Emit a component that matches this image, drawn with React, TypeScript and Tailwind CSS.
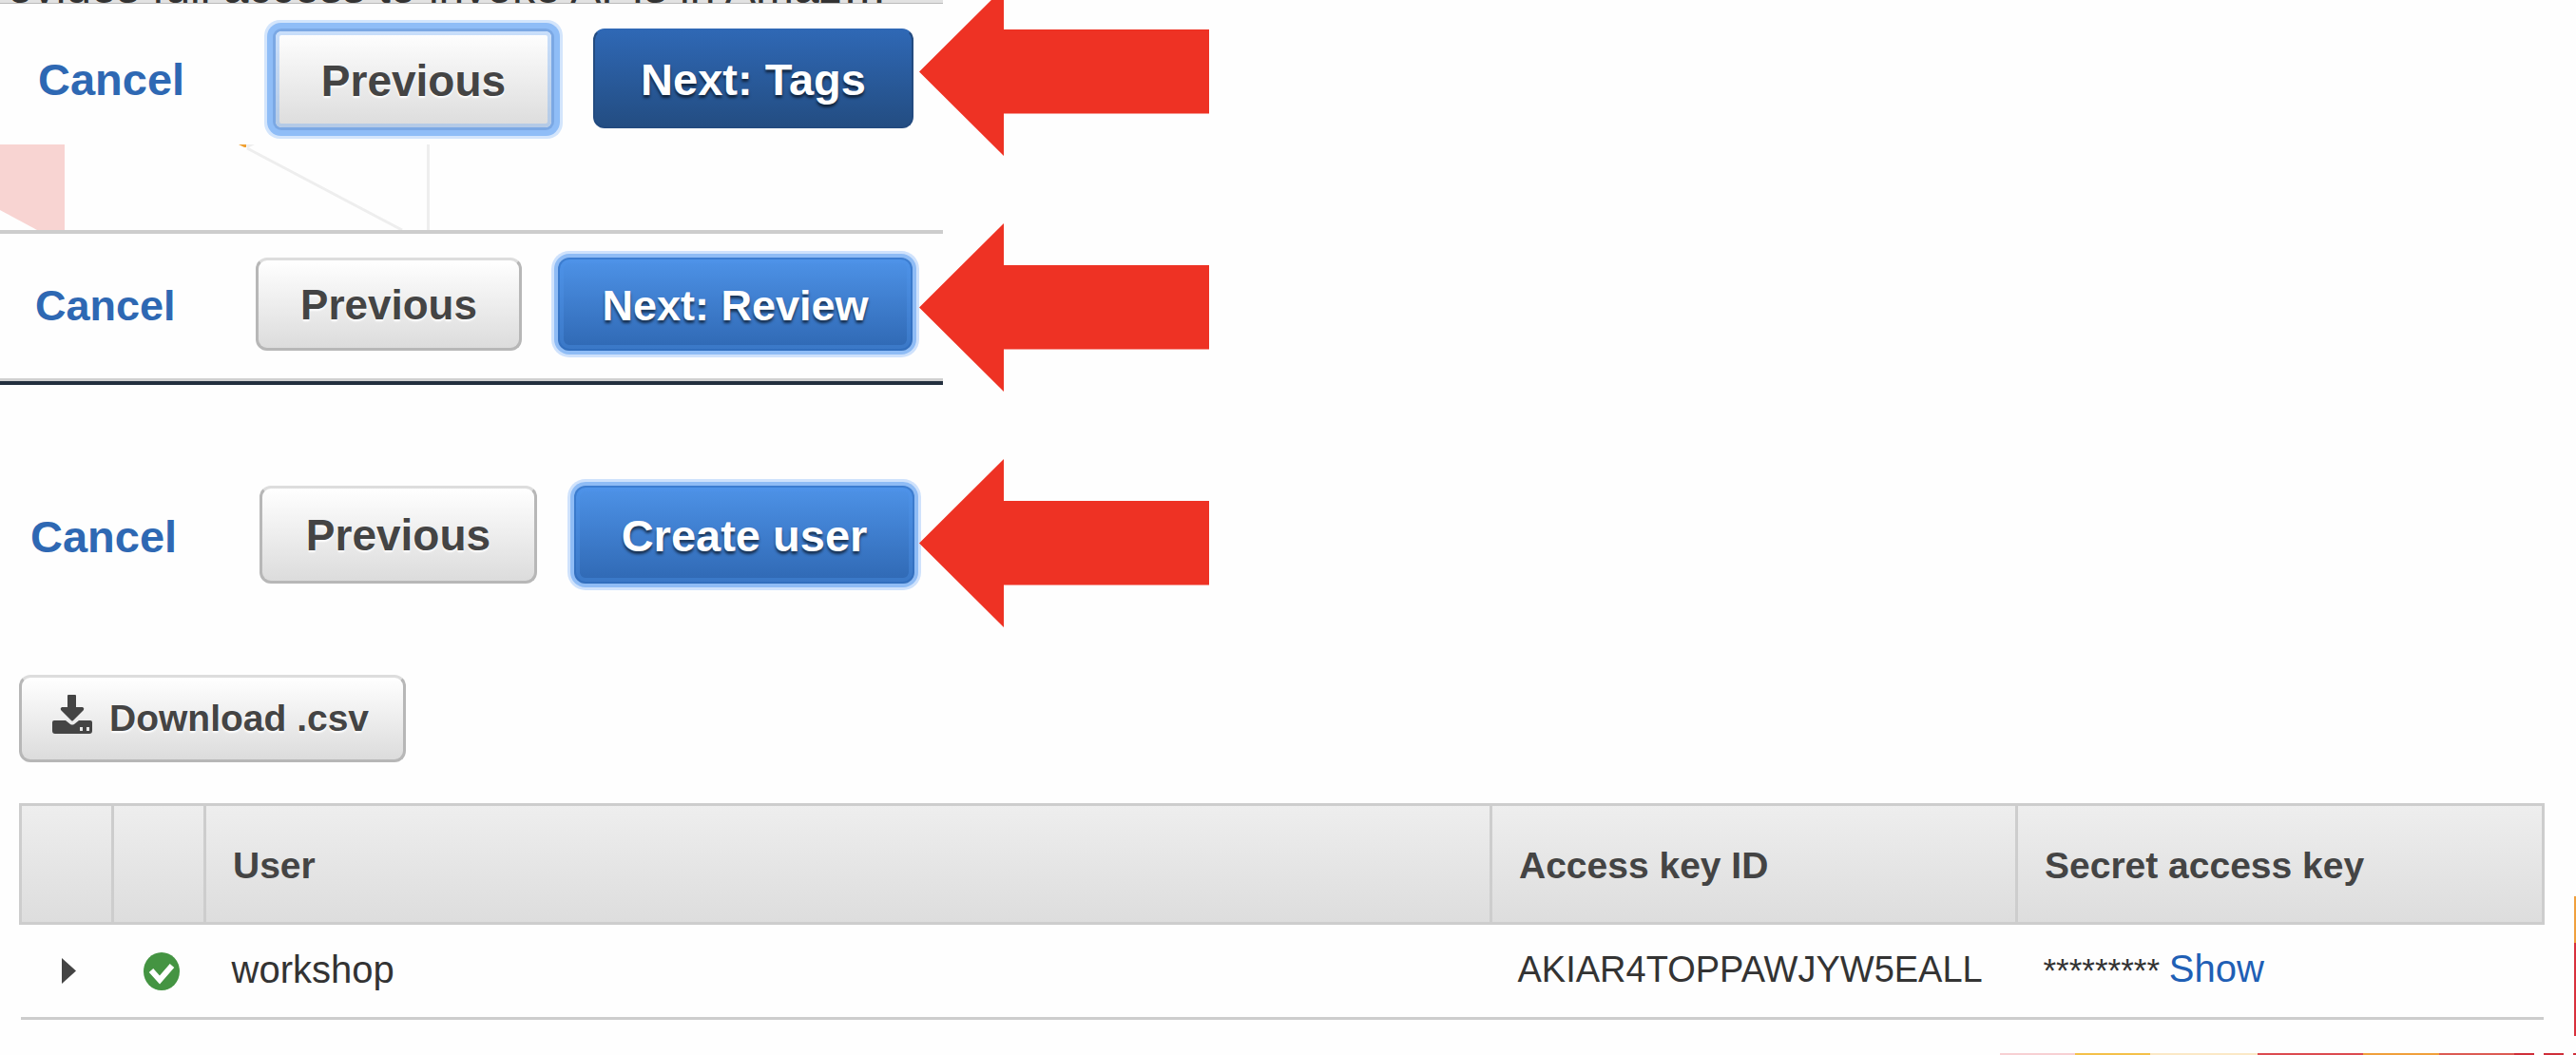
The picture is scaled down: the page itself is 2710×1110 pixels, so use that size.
import type { ReactNode } from "react";

const focusRing =
  "shadow-[inset_0_0_0_2px_rgba(40,100,180,0.45),inset_0_0_0_6px_rgba(80,150,235,0.35),0_0_0_4px_#8fbcf5,0_0_0_7px_#cfe2fc]";
const primaryBlue =
  "rounded-xl bg-linear-to-b from-[#4e93e8] to-[#2f68b3] pt-[3px] font-bold text-white [text-shadow:0_3px_3px_rgba(0,0,0,0.6)]";
const grey =
  "rounded-xl border-[3px] border-[#b7b7b7] border-t-[#dddddd] bg-linear-to-b from-white to-[#dcdcdc] font-bold text-[#444444] [text-shadow:0_2px_2px_white]";

function Arrow() {
  return (
    <svg className="block h-[177px] w-[305px]" viewBox="0 0 305 177" aria-hidden="true">
      <path d="M0 88.5 89 0V44H305V132.500H89V177Z" fill="#ee3224" />
    </svg>
  );
}

function Step({ children, className }: { children: ReactNode; className: string }) {
  return <div className={"flex shrink-0 items-start whitespace-nowrap " + className}>{children}</div>;
}

function Backdrop() {
  return (
    <svg className="block h-[90px] w-full" viewBox="0 0 992 90" aria-hidden="true">
      <path d="M0 0H68V90H39L0 69Z" fill="#f8d4d2" />
      <path d="M260 4 423 90M450.500 0V90" stroke="#eeeeee" strokeWidth="3" fill="none" />
      <path d="M259 0H268L260 4Z" fill="#eeeeee" />
      <path d="M251 0H259V3H257Z" fill="#f0a030" />
    </svg>
  );
}

function DownloadIcon() {
  return (
    <svg className="mb-[9px] h-[41px] w-[42px]" viewBox="0 0 42 41" aria-hidden="true">
      <path d="M16 1Q16 0 17 0H24Q25 0 25 1V13H32Q34 14 33 16L22 27Q21 28 20 27L9 16Q8 14 10 13H16Z" fill="#444444" />
      <path
        fillRule="evenodd"
        d="M2 27H14L19 31Q21 32 23 31L28 27H40Q42 27 42 29V38Q42 41 39 41H3Q0 41 0 38V29Q0 27 2 27ZM29 34V38H32V34ZM36 34V38H39V34Z"
        fill="#444444"
      />
    </svg>
  );
}

const stripe = [
  ["w-[79px]", "bg-[#f7d0d3]"],
  ["w-[79px]", "bg-[#f4c04a]"],
  ["w-[113px]", "bg-[#fbe8c6]"],
  ["w-[111px]", "bg-[#dc4b50]"],
  ["w-[80px]", "bg-[#f0a03c]"],
  ["w-[79px]", "bg-[#dc5b53]"],
  ["w-[21px]", "bg-[#cf2f3a]"],
  ["w-[10px]", "bg-transparent"],
  ["w-[21px]", "bg-[#cf2f3a]"],
  ["w-[10px]", "bg-transparent"],
  ["w-[3px]", "bg-[#cf2f3a]"],
];

export default function App() {
  return (
    <div className="relative min-h-screen overflow-hidden bg-[#fefefe] font-['Liberation_Sans',Arial,sans-serif] text-[#444444]">
      <div className="flex items-start">
        <div className="w-[992px] shrink-0">
          <div className="flex h-[4px] items-end overflow-hidden border-b border-[#bbbbbb] bg-[#e2e2e2] pl-[8px]">
            <p className="text-[48px] leading-[32px] whitespace-nowrap text-[#333333]">
              ovides full access to invoke APIs in Amaz…
            </p>
          </div>
          <Step className="h-[148px] pl-[40px]">
            <a href="#cancel" className="mt-[53px] w-[250px] text-[47px] leading-[54px] font-bold text-[#2e68b3]">
              Cancel
            </a>
            <button
              type="button"
              className="mt-[29px] h-[101px] w-[290px] rounded-md bg-linear-to-b from-white to-[#dcdcdc] pt-[3px] text-[46px] font-bold shadow-[inset_0_0_0_4px_rgba(120,175,245,0.4),0_0_0_3px_#7ba8e4,0_0_0_9px_#8fbdf7,0_0_0_12px_#d3e5fc] [text-shadow:0_2px_2px_white]"
            >
              Previous
            </button>
            <button
              type="button"
              className="mt-[26px] ml-[44px] h-[105px] w-[337px] rounded-xl border-2 border-[#234b80] border-t-[#2f68b5] bg-linear-to-b from-[#2f68b5] to-[#234d82] pt-[4px] text-[47px] font-bold text-white [text-shadow:0_3px_3px_rgba(0,0,0,0.6)]"
            >
              Next: Tags
            </button>
          </Step>
          <Backdrop />
          <Step className="h-[156px] border-t-[4px] border-[#cdcdcd] pl-[37px]">
            <a href="#cancel" className="mt-[50px] w-[232px] text-[45px] leading-[52px] font-bold text-[#2e68b3]">
              Cancel
            </a>
            <button type="button" className={"mt-[25px] h-[98px] w-[280px] pt-[2px] text-[44px] " + grey}>
              Previous
            </button>
            <button
              type="button"
              className={"mt-[25px] ml-[38px] h-[98px] w-[373px] text-[45px] " + primaryBlue + " " + focusRing}
            >
              Next: Review
            </button>
          </Step>
          <div className="h-[7px] border-t-[3px] border-t-[#d0d0d0] bg-[#232f3e]" />
          <Step className="h-[305px] pt-[106px] pl-[32px]">
            <a href="#cancel" className="mt-[27px] w-[241px] text-[47px] leading-[54px] font-bold text-[#2e68b3]">
              Cancel
            </a>
            <button type="button" className={"h-[103px] w-[292px] pt-[2px] text-[46px] " + grey}>
              Previous
            </button>
            <button
              type="button"
              className={"ml-[39px] h-[103px] w-[358px] text-[47px] " + primaryBlue + " " + focusRing}
            >
              Create user
            </button>
          </Step>
        </div>
        <div className="-mt-[13px] -ml-[25px] flex flex-col gap-[71px]">
          <Arrow />
          <Arrow />
          <Arrow />
        </div>
      </div>

      <main className="pr-[33px] pl-[20px]">
        <button
          type="button"
          className={"flex h-[92px] w-[407px] items-center gap-[18px] pl-[32px] text-[39px] whitespace-nowrap " + grey}
        >
          <DownloadIcon />
          Download .csv
        </button>
        <table className="mt-[43px] w-full table-fixed border-collapse text-left text-[40px] leading-[46px] whitespace-nowrap">
          <colgroup>
            <col className="w-[97px]" />
            <col className="w-[97px]" />
            <col />
            <col className="w-[553px]" />
            <col className="w-[554px]" />
          </colgroup>
          <thead>
            <tr className="h-[125px] bg-linear-to-b from-[#eeeeee] to-[#dddddd] text-[39px]">
              <th className="border-[3px] border-[#cdcdcd]" aria-label="Expand" />
              <th className="border-[3px] border-[#cdcdcd]" aria-label="Status" />
              <th className="border-[3px] border-[#cdcdcd] pt-[4px] pl-[28px]">User</th>
              <th className="border-[3px] border-[#cdcdcd] pt-[4px] pl-[28px]">Access key ID</th>
              <th className="border-[3px] border-[#cdcdcd] pt-[4px] pl-[28px]">Secret access key</th>
            </tr>
          </thead>
          <tbody>
            <tr className="h-[100px] border-b-[3px] border-[#cdcdcd] text-[#333333]">
              <td>
                <button type="button" aria-label="Expand workshop" className="flex pl-[43px]">
                  <svg className="h-[27px] w-[15px]" viewBox="0 0 15 27" aria-hidden="true">
                    <path d="M0 0 15 13.500 0 27Z" fill="#444444" />
                  </svg>
                </button>
              </td>
              <td>
                <svg className="ml-[32px] h-[40px] w-[38px]" viewBox="0 0 38 40" role="img" aria-label="Complete">
                  <ellipse cx="19" cy="20" rx="19" ry="20" fill="#449442" />
                  <path d="m8 19 9 10L30 14" fill="none" stroke="white" strokeWidth="6" />
                </svg>
              </td>
              <td className="pb-[4px] pl-[28px]">workshop</td>
              <td className="pb-[4px] pl-[28px] text-[38px]">AKIAR4TOPPAWJYW5EALL</td>
              <td className="pb-[4px] pl-[28px]">
                <span className="text-[35px]">********* </span>
                <a href="#show" className="text-[#1f5fb5]">
                  Show
                </a>
              </td>
            </tr>
          </tbody>
        </table>
      </main>

      <div className="absolute right-0 bottom-0 flex h-[2px]" aria-hidden="true">
        {stripe.map(([w, c], i) => (
          <span key={i} className={w + " " + c} />
        ))}
      </div>
      <div className="absolute right-0 bottom-[20px] flex w-[2px] flex-col" aria-hidden="true">
        <span className="h-[49px] bg-[#f0a03c]" />
        <span className="h-[98px] bg-[#d8303c]" />
      </div>
    </div>
  );
}
